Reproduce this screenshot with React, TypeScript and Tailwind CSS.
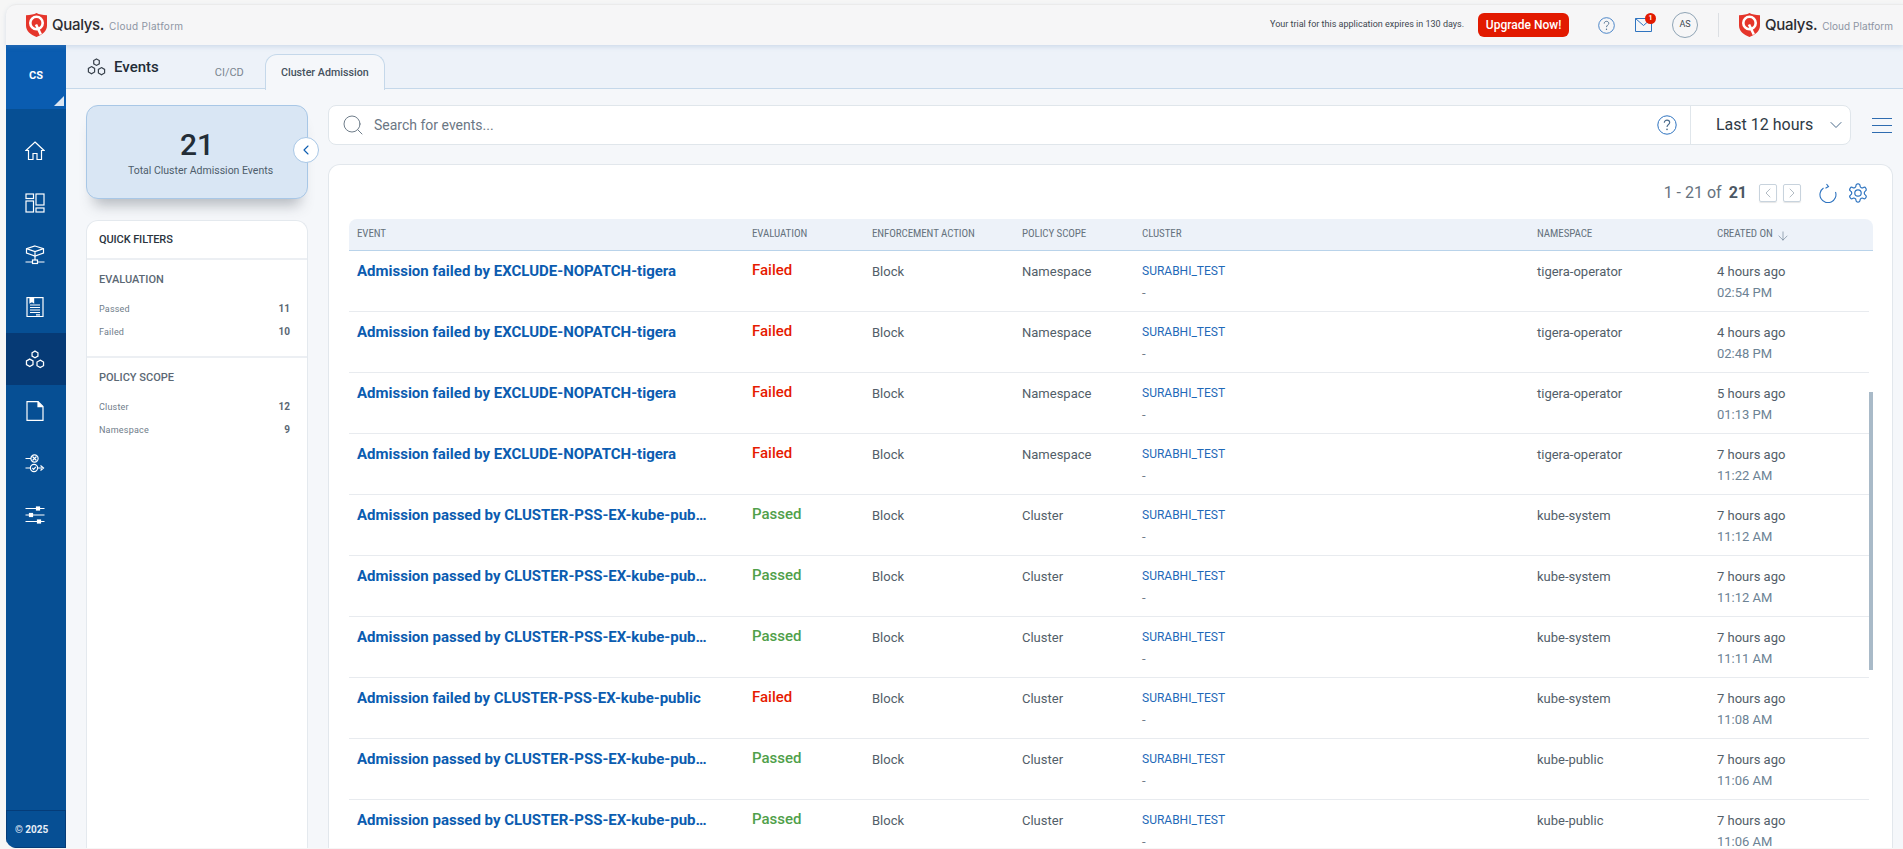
import { ChevronDown, ChevronLeft, ChevronRight, Search, ArrowDown } from 'lucide-react';

const failedTigera = 'Admission failed by EXCLUDE-NOPATCH-tigera';
const passedPublic = 'Admission passed by CLUSTER-PSS-EX-kube-public';

const events = [
  { name: failedTigera, status: 'Failed', scope: 'Namespace', ns: 'tigera-operator', ago: '4 hours ago', time: '02:54 PM' },
  { name: failedTigera, status: 'Failed', scope: 'Namespace', ns: 'tigera-operator', ago: '4 hours ago', time: '02:48 PM' },
  { name: failedTigera, status: 'Failed', scope: 'Namespace', ns: 'tigera-operator', ago: '5 hours ago', time: '01:13 PM' },
  { name: failedTigera, status: 'Failed', scope: 'Namespace', ns: 'tigera-operator', ago: '7 hours ago', time: '11:22 AM' },
  { name: passedPublic, status: 'Passed', scope: 'Cluster', ns: 'kube-system', ago: '7 hours ago', time: '11:12 AM' },
  { name: passedPublic, status: 'Passed', scope: 'Cluster', ns: 'kube-system', ago: '7 hours ago', time: '11:12 AM' },
  { name: passedPublic, status: 'Passed', scope: 'Cluster', ns: 'kube-system', ago: '7 hours ago', time: '11:11 AM' },
  { name: 'Admission failed by CLUSTER-PSS-EX-kube-public', status: 'Failed', scope: 'Cluster', ns: 'kube-system', ago: '7 hours ago', time: '11:08 AM' },
  { name: passedPublic, status: 'Passed', scope: 'Cluster', ns: 'kube-public', ago: '7 hours ago', time: '11:06 AM' },
  { name: passedPublic, status: 'Passed', scope: 'Cluster', ns: 'kube-public', ago: '7 hours ago', time: '11:06 AM' },
];

const gridCols = 'grid grid-cols-[403px_120px_150px_120px_395px_180px_1fr]';

function Shield({ className }: { className: string }) {
  return (
    <svg viewBox="0 0 21 24" className={className}>
      <path d="M10.5 0C13 1.4 16.5 2.2 21 2.2V12.5C21 18 16.5 21.8 10.5 24C4.5 21.8 0 18 0 12.5V2.2C4.5 2.2 8 1.4 10.5 0Z" fill="#e5352b" />
      <circle cx="10.5" cy="10" r="6.2" fill="none" stroke="#fff" strokeWidth="2.6" />
      <path d="M10 11.5L14.8 21.5" stroke="#fff" strokeWidth="2.6" />
    </svg>
  );
}

function Logo({ tight }: { tight?: boolean }) {
  return (
    <div className="flex items-center">
      <Shield className="h-6 w-[21px]" />
      <span className="ml-[5px] font-[family-name:Inter,sans-serif] text-[15px] font-medium tracking-[-0.3px] text-[#2b2b30]">Qualys.</span>
      <span className={`ml-[5px] mt-[2px] font-[family-name:Inter,sans-serif] text-[10px] text-[#8d95a3] ${tight ? 'tracking-[0.05px]' : 'tracking-[0.3px]'}`}>Cloud Platform</span>
    </div>
  );
}

function HelpIcon({ className }: { className: string }) {
  return (
    <svg viewBox="0 0 20 20" fill="none" className={className}>
      <circle cx="10" cy="10" r="9.2" stroke="#2f74c0" strokeWidth="1" />
      <path d="M7.3 7.7C7.3 6.1 8.5 5.1 10 5.1C11.5 5.1 12.7 6.1 12.7 7.5C12.7 9.4 10 9.6 10 11.9" stroke="#4a6a8a" strokeWidth="1.1" />
      <circle cx="10" cy="14.4" r="0.8" fill="#4a6a8a" />
    </svg>
  );
}

function HexGroup({ color, className }: { color: string; className: string }) {
  return (
    <svg viewBox="0 0 19 18" fill="none" stroke={color} strokeWidth="1.2" className={className}>
      <path d="M9.5 1L12.3 2.6V5.8L9.5 7.4L6.7 5.8V2.6Z" />
      <path d="M4.5 8.6L7.6 10.4V13.9L4.5 15.7L1.4 13.9V10.4Z" />
      <path d="M14.5 9.6L17.6 11.4V14.9L14.5 16.7L11.4 14.9V11.4Z" />
    </svg>
  );
}

function HomeIcon() {
  return (
    <svg viewBox="0 0 20 20" fill="none" stroke="#fff" strokeWidth="1.2" className="h-5 w-5">
      <path d="M10 1L19 9.5H16.5V18.5H12V12.5H8V18.5H3.5V9.5H1Z" />
    </svg>
  );
}

function DashboardIcon() {
  return (
    <svg viewBox="0 0 20 20" fill="none" stroke="#fff" strokeWidth="1.2" className="h-5 w-5">
      <rect x="1" y="1" width="7.5" height="4.5" />
      <rect x="1" y="8" width="7.5" height="11" />
      <rect x="11" y="1" width="8" height="11" />
      <rect x="11" y="15" width="8" height="4" />
    </svg>
  );
}

function CubeIcon() {
  return (
    <svg viewBox="0 0 20 20" fill="none" stroke="#fff" strokeWidth="1.2" className="h-5 w-5">
      <path d="M10 1L18.5 3.6V8L10 11L1.5 8V3.6Z" />
      <path d="M1.5 3.6L10 6.5L18.5 3.6M10 6.5V15" />
      <rect x="7.5" y="15" width="5" height="3.5" />
      <path d="M0.5 17H7.5M12.5 17H19.5" />
    </svg>
  );
}

function ReportIcon() {
  return (
    <svg viewBox="0 0 20 20" fill="none" stroke="#fff" strokeWidth="1.2" className="h-5 w-5">
      <rect x="2" y="0.6" width="16" height="19" />
      <path d="M5 1V5.5L6.8 4.2L8.6 5.5V1" fill="#fff" />
      <path d="M5 8H15M5 10.5H15M5 13H15M5 15.5H15M11 17.8H15" />
    </svg>
  );
}

function FileIcon() {
  return (
    <svg viewBox="0 0 20 20" fill="none" stroke="#fff" strokeWidth="1.2" className="h-5 w-5">
      <path d="M2 0.6H13L18 5.6V19.4H2Z" />
      <path d="M13 0.6V5.6H18" fill="#fff" />
    </svg>
  );
}

function ValveIcon() {
  return (
    <svg viewBox="0 0 20 20" fill="none" stroke="#fff" strokeWidth="1.2" className="h-5 w-5">
      <path d="M0.5 5.5H6M0.5 15H5" />
      <circle cx="9.5" cy="5.5" r="3.6" />
      <path d="M7.5 3.5L11.5 7.5M11.5 3.5L7.5 7.5" />
      <circle cx="9" cy="15" r="3.6" />
      <path d="M7.4 15L8.6 16.3L10.8 13.8" />
      <path d="M13 15H17M15.5 12.5L18.5 15L15.5 17.5" />
    </svg>
  );
}

function SlidersIcon() {
  return (
    <svg viewBox="0 0 20 20" fill="none" stroke="#fff" strokeWidth="1.2" className="h-5 w-5">
      <path d="M0.5 3.5H19.5M0.5 10H19.5M0.5 16.5H19.5" />
      <rect x="11.5" y="2" width="3" height="3" fill="#fff" />
      <rect x="4.5" y="8.5" width="3" height="3" fill="#fff" />
      <rect x="12.5" y="15" width="3" height="3" fill="#fff" />
    </svg>
  );
}

function RefreshIcon() {
  return (
    <svg viewBox="0 0 18 20" fill="none" stroke="#2f74c0" strokeWidth="1.1" className="h-5 w-[18px]">
      <path d="M4.5 5A8 8 0 1 0 16.5 9" />
      <path d="M7.5 1L9.5 3.6L6.5 5.2" />
    </svg>
  );
}

function GearIcon() {
  return (
    <svg viewBox="0 0 24 24" fill="none" stroke="#2f74c0" strokeWidth="1.3" className="h-[22px] w-[22px]">
      <path d="M12.22 2h-.44a2 2 0 0 0-2 2v.18a2 2 0 0 1-1 1.73l-.43.25a2 2 0 0 1-2 0l-.15-.08a2 2 0 0 0-2.73.73l-.22.38a2 2 0 0 0 .73 2.73l.15.1a2 2 0 0 1 1 1.72v.51a2 2 0 0 1-1 1.74l-.15.09a2 2 0 0 0-.73 2.73l.22.38a2 2 0 0 0 2.73.73l.15-.08a2 2 0 0 1 2 0l.43.25a2 2 0 0 1 1 1.73V20a2 2 0 0 0 2 2h.44a2 2 0 0 0 2-2v-.18a2 2 0 0 1 1-1.73l.43-.25a2 2 0 0 1 2 0l.15.08a2 2 0 0 0 2.73-.73l.22-.39a2 2 0 0 0-.73-2.73l-.15-.08a2 2 0 0 1-1-1.74v-.5a2 2 0 0 1 1-1.74l.15-.09a2 2 0 0 0 .73-2.73l-.22-.38a2 2 0 0 0-2.73-.73l-.15.08a2 2 0 0 1-2 0l-.43-.25a2 2 0 0 1-1-1.73V4a2 2 0 0 0-2-2z" />
      <circle cx="12" cy="12" r="3.5" />
    </svg>
  );
}

const navItems = [
  { icon: <HomeIcon /> },
  { icon: <DashboardIcon /> },
  { icon: <CubeIcon /> },
  { icon: <ReportIcon /> },
  { icon: <HexGroup color="#fff" className="h-[19px] w-5" />, active: true },
  { icon: <FileIcon /> },
  { icon: <ValveIcon /> },
  { icon: <SlidersIcon /> },
];

function Sidebar() {
  return (
    <aside className="flex w-[60px] shrink-0 flex-col overflow-hidden rounded-bl-[10px] bg-[#064f94]">
      <div className="relative flex h-16 items-center justify-center bg-[#0a5cb0] pb-[2px] text-[11px] font-bold text-white">
        CS
        <div className="absolute bottom-[3px] right-[2px] h-0 w-0 border-b-[10px] border-l-[10px] border-b-[#dbe6f2] border-l-transparent" />
      </div>
      <nav className="flex-1 pt-4">
        {navItems.map((item, i) => (
          <div key={i} className={`flex h-[52px] items-center justify-center pr-[2px] ${item.active ? 'bg-[#063a75]' : ''}`}>
            {item.icon}
          </div>
        ))}
      </nav>
      <div className="flex h-[38px] items-center border border-[#053c78] pl-[8px] text-[10px] font-bold text-[#e6eef7]">© 2025</div>
    </aside>
  );
}

function FilterGroup({ title, items }: { title: string; items: [string, number][] }) {
  return (
    <div className="border-b-2 border-[#eceff3] px-3 pb-[16px] pt-[13px] last:border-b-0">
      <div className="text-[11px] font-medium leading-[14px] text-[#5b6874]">{title}</div>
      <div className="mt-[14px] flex flex-col gap-[7px]">
        {items.map(([label, count]) => (
          <div key={label} className="flex justify-between pr-[5px] text-[10px] leading-4">
            <span className="text-[9px] tracking-[0.2px] text-[#6f7d8a]">{label}</span>
            <span className="font-bold text-[#5b6874]">{count}</span>
          </div>
        ))}
      </div>
    </div>
  );
}

function LeftPanel() {
  return (
    <div className="relative flex w-[222px] shrink-0 flex-col">
      <div className="flex h-[94px] flex-col items-center rounded-xl border border-[#a8c7e6] bg-[#d9e6f4] pt-[21px] shadow-[0_14px_14px_-8px_rgba(60,70,80,0.35)]">
        <div className="text-[30px] font-medium leading-9 text-[#232d37]">21</div>
        <div className="mt-px pl-[7px] text-[10.5px] leading-[14px] text-[#4e5d6b]">Total Cluster Admission Events</div>
      </div>
      <div className="absolute left-[207px] top-[32px] flex h-[26px] w-[26px] items-center justify-center rounded-full border border-[#a8c7e6] bg-white">
        <ChevronLeft className="h-4 w-4 text-[#0b5cb0]" strokeWidth={1.6} />
      </div>
      <div className="mt-[21px] flex-1 rounded-t-xl border border-b-0 border-[#e4e9ee] bg-white">
        <div className="flex h-[39px] items-center border-b-2 border-[#eceff3] px-3 pt-[2px] text-[11px] font-medium tracking-[-0.1px] text-[#2a343e]">QUICK FILTERS</div>
        <FilterGroup title="EVALUATION" items={[['Passed', 11], ['Failed', 10]]} />
        <FilterGroup title="POLICY SCOPE" items={[['Cluster', 12], ['Namespace', 9]]} />
      </div>
    </div>
  );
}

function SearchBar() {
  return (
    <div className="flex items-center">
      <div className="flex h-10 w-[1523px] items-center rounded-lg border border-[#e0e6eb] bg-white">
        <Search className="ml-[12px] h-6 w-6 text-[#6f7d8a]" strokeWidth={1} />
        <span className="ml-[9px] flex-1 text-[14px] text-[#6b7784]">Search for events...</span>
        <HelpIcon className="h-5 w-5" />
        <div className="ml-[13px] flex h-full w-[160px] items-center border-l border-[#e0e6eb] pl-[25px] text-[16px] text-[#2f3a45]">
          Last 12 hours
          <ChevronDown className="ml-[13px] h-5 w-5 text-[#4a6a8a]" strokeWidth={1.2} />
        </div>
      </div>
      <div className="ml-[21px] flex w-[20px] flex-col gap-[6px]">
        <div className="h-px bg-[#2f6cb0]" />
        <div className="h-px bg-[#2f6cb0]" />
        <div className="h-px bg-[#2f6cb0]" />
      </div>
    </div>
  );
}

function EventsTable() {
  return (
    <div className="mt-[19px] flex-1 overflow-hidden rounded-t-xl border border-b-0 border-[#e2e7ec] bg-white pl-[20px] pr-[19px]">
      <div className="flex h-[54px] items-center justify-end pr-[4px] pt-[1px]">
        <span className="text-[16px] text-[#66727e]">1 - 21 of</span>
        <span className="ml-[7px] text-[16px] font-bold text-[#4c5864]">21</span>
        <div className="ml-[12px] flex h-[18px] w-[18px] items-center justify-center rounded-[2px] border border-[#c8d3dd] shadow-[0_1px_1px_rgba(0,0,0,0.1)]">
          <ChevronLeft className="h-4 w-4 text-[#8d9aa6]" strokeWidth={1} />
        </div>
        <div className="ml-[6px] flex h-[18px] w-[18px] items-center justify-center rounded-[2px] border border-[#c8d3dd] shadow-[0_1px_1px_rgba(0,0,0,0.1)]">
          <ChevronRight className="h-4 w-4 text-[#8d9aa6]" strokeWidth={1} />
        </div>
        <div className="ml-[18px]"><RefreshIcon /></div>
        <div className="ml-[10px]"><GearIcon /></div>
      </div>
      <div className={`${gridCols} h-[32px] items-center rounded-t-lg border-b border-[#b9d3ea] bg-[#edf2f9] text-[11px] tracking-[-0.1px] font-stretch-condensed text-[#66727e]`}>
        <div className="pl-2">EVENT</div>
        <div>EVALUATION</div>
        <div>ENFORCEMENT ACTION</div>
        <div>POLICY SCOPE</div>
        <div>CLUSTER</div>
        <div>NAMESPACE</div>
        <div className="flex items-center">
          CREATED ON
          <ArrowDown className="ml-[3px] mt-[2px] h-[14px] w-[14px] text-[#5f7488]" strokeWidth={1} />
        </div>
      </div>
      <div className="relative">
        {events.map((e, i) => (
          <div key={i} className={`${gridCols} mr-[4px] h-[61px] border-b border-[#e8ebef] pt-[10px] text-[13px] leading-[21px] text-[#525e69]`}>
            <div className="truncate pl-2 pr-[44px] text-[15px] font-bold text-[#0b5cb0]">{e.name}</div>
            <div className={`-mt-[1px] text-[15px] font-medium ${e.status === 'Failed' ? 'text-[#e61a00]' : 'text-[#4fa04a]'}`}>{e.status}</div>
            <div>Block</div>
            <div>{e.scope}</div>
            <div>
              <div className="text-[12px] text-[#1f69b8]">SURABHI_TEST</div>
              <div className="text-[#6f7d8a]">-</div>
            </div>
            <div>{e.ns}</div>
            <div>
              <div>{e.ago}</div>
              <div className="text-[#6c8294]">{e.time}</div>
            </div>
          </div>
        ))}
        <div className="absolute right-0 top-[141px] h-[278px] w-1 bg-[#a9bac8]" />
      </div>
    </div>
  );
}

export default function App() {
  return (
    <div className="h-[849px] w-[1903px] overflow-hidden bg-[#f6f6f6] pb-px pl-[6px] pt-[4px] font-[family-name:Roboto,sans-serif]">
      <div className="flex h-full flex-col">
        <header className="z-10 flex h-[41px] shrink-0 items-center rounded-tl-[10px] border-t border-[#ebebeb] bg-[#f6f6f7] pl-5 shadow-[0_2px_4px_rgba(120,150,190,0.25)]">
          <Logo />
          <span className="ml-auto text-[9px] text-[#3d4750]">Your trial for this application expires in 130 days.</span>
          <button className="ml-[14px] flex h-6 w-[91px] items-center justify-center rounded-md bg-[#e21a00] text-[12px] font-medium text-white">Upgrade Now!</button>
          <HelpIcon className="ml-[29px] h-[17px] w-[17px]" />
          <div className="relative ml-[20px] h-[14px] w-[17px]">
            <svg viewBox="0 0 17 14" fill="none" stroke="#2f74c0" strokeWidth="1" className="h-[14px] w-[17px]">
              <path d="M0.5 0.5H16.5V13.5H0.5Z" />
              <path d="M0.5 0.5L8.5 7.5L16.5 0.5" />
            </svg>
            <div className="absolute -right-[4px] -top-[5px] flex h-[11px] w-[11px] items-center justify-center rounded-full bg-[#e21a00] text-[7px] font-bold text-white">1</div>
          </div>
          <div className="ml-[20px] flex h-[26px] w-[26px] items-center justify-center rounded-full border border-[#8fa4b5] text-[9px] text-[#3d4750]">AS</div>
          <div className="mx-[20px] h-6 w-px bg-[#dcdfe3]" />
          <div className="pr-[10px]"><Logo tight /></div>
        </header>
        <div className="flex min-h-0 flex-1">
          <Sidebar />
          <main className="flex min-w-0 flex-1 flex-col bg-[#f5f7fa]">
            <div className="flex h-[44px] shrink-0 border-b border-[#c5d8ea] bg-[#edf2f9]">
              <div className="ml-[21px] flex h-[43px] items-start pt-[13px]">
                <HexGroup color="#39424c" className="h-[18px] w-[19px]" />
                <span className="ml-[8px] text-[15px] font-medium leading-[19px] text-[#232d37]">Events</span>
              </div>
              <div className="ml-[56px] pt-[20px] text-[11px] leading-4 text-[#7a8590]">CI/CD</div>
              <div className="ml-[21px] mt-[9px] flex h-[36px] w-[120px] justify-center rounded-t-xl border border-b-0 border-[#c5d8ea] bg-[#f5f7fa] pt-[10px] text-[10.7px] font-medium leading-4 text-[#46525e]">Cluster Admission</div>
            </div>
            <div className="flex min-h-0 flex-1 pl-5 pt-4">
              <LeftPanel />
              <div className="ml-5 flex min-w-0 flex-1 flex-col pr-[10px]">
                <SearchBar />
                <EventsTable />
              </div>
            </div>
          </main>
        </div>
      </div>
    </div>
  );
}
